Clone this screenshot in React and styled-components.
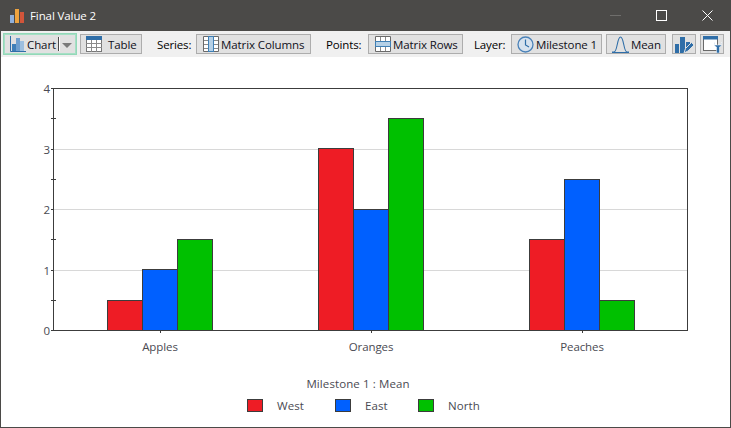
import React from "react";
import styled, { createGlobalStyle } from "styled-components";

const GlobalStyle = createGlobalStyle`
  html, body {
    margin: 0;
    padding: 0;
    background: #ffffff;
  }
  body {
    font-family: "Open Sans", "Noto Sans", "Liberation Sans", sans-serif;
    font-size: 12px;
  }
`;

const Window = styled.div`
  width: 731px;
  height: 428px;
  box-sizing: border-box;
  border: 1px solid #4b4a48;
  border-top: none;
  display: flex;
  flex-direction: column;
  background: #ffffff;
  overflow: hidden;
`;

const TitleBar = styled.div`
  height: 31px;
  flex: none;
  background: #4b4a48;
  display: flex;
  align-items: center;
  padding-left: 9px;
  color: #ffffff;
`;

const Title = styled.span`
  margin-left: 5px;
  font-size: 11.5px;
  letter-spacing: -0.1px;
`;

const WindowControls = styled.div`
  margin-left: auto;
  display: flex;
  align-items: center;
`;

const WindowControl = styled.div`
  width: 46px;
  height: 31px;
  display: flex;
  align-items: center;
  justify-content: center;
`;

const Toolbar = styled.div`
  height: 26px;
  flex: none;
  background: #f0f0f0;
  display: flex;
  align-items: center;
  padding-left: 2px;
`;

const ToolButton = styled.div`
  height: 20px;
  box-sizing: border-box;
  margin-left: ${(p) => p.$gap || 0}px;
  width: ${(p) => p.$width}px;
  background: #e1e1e1;
  border: 1px solid #adadad;
  display: flex;
  align-items: center;
  padding-left: ${(p) => p.$pad ?? 2}px;
  color: #101020;
  font-size: 11.5px;
  letter-spacing: -0.1px;
  white-space: nowrap;
`;

const ActiveButton = styled(ToolButton)`
  height: 22px;
  border: 1px solid #93d8b8;
  box-shadow: inset 0 0 0 1px #a6dfc5;
`;

const ButtonLabel = styled.span`
  margin-left: ${(p) => p.$gap ?? 3}px;
`;

const Separator = styled.span`
  width: 1px;
  height: 14px;
  background: #4a4a4a;
  box-shadow: 1px 0 0 #ffffff;
  margin-left: 2px;
`;

const Caret = styled.span`
  width: 0;
  height: 0;
  margin-left: 3px;
  margin-top: 2px;
  border-left: 5px solid transparent;
  border-right: 5px solid transparent;
  border-top: 5px solid #7a7a7a;
`;

const ToolLabel = styled.span`
  margin-left: ${(p) => p.$gap}px;
  width: ${(p) => p.$width}px;
  color: #000000;
  font-size: 11.5px;
  letter-spacing: -0.15px;
  white-space: nowrap;
`;

const ChartArea = styled.div`
  flex: 1;
  display: flex;
  flex-direction: column;
  background: #ffffff;
`;

const Plot = styled.svg`
  display: block;
  flex: none;
  width: 729px;
  height: 313px;
`;

const AxisText = styled.text`
  font-family: "Open Sans", "Noto Sans", sans-serif;
  font-size: 11.5px;
  fill: #4a4a52;
  letter-spacing: -0.1px;
`;

const LegendTitle = styled.div`
  text-align: center;
  margin-left: -15px;
  margin-top: 6px;
  height: 16px;
  line-height: 16px;
  font-size: 11.5px;
  letter-spacing: 0.1px;
  color: #4a4a52;
`;

const Legend = styled.div`
  display: flex;
  padding-left: 246px;
  margin-top: 6px;
`;

const LegendItem = styled.div`
  display: flex;
  align-items: center;
  width: ${(p) => p.$width}px;
  font-size: 11.5px;
  letter-spacing: 0.1px;
  color: #4a4a52;
`;

const Swatch = styled.span`
  width: 16px;
  height: 13px;
  box-sizing: border-box;
  border: 1px solid #3c3c3c;
  background: ${(p) => p.$color};
  margin-right: 14px;
`;

const BLUE = "#2f6ea8";

const ChartIcon = () => (
  <svg width="16" height="16" viewBox="0 0 16 16">
    <path d="M0.500 0v15.500h16" fill="none" stroke={BLUE} />
    <rect x="2" y="8" width="4" height="7" fill="#3f7fb8" />
    <rect x="6" y="2" width="4" height="13" fill="#6f9fce" />
    <rect x="10" y="5" width="4" height="10" fill="#9dbfe0" />
  </svg>
);

const TableIcon = () => (
  <svg width="16" height="16" viewBox="0 0 16 16">
    <rect x="0.500" y="0.500" width="15" height="15" fill="#fff" stroke="#777" />
    <rect x="0" y="0" width="16" height="4" fill={BLUE} />
    <path d="M5.500 4v12M10.500 4v12M0 7.500h16M0 11.500h16" stroke="#8a8a8a" />
  </svg>
);

const ColumnsIcon = () => (
  <svg width="16" height="16" viewBox="0 0 16 16">
    <path d="M0.500 0.500h15v15h-15z" fill="#fff" stroke="#6a6a6a" />
    <rect x="5.500" y="0.500" width="5" height="15" fill="#b5d0e6" stroke="#3f7fb5" />
    <path d="M1 4.500h4M1 8.500h4M1 12.500h4M11 4.500h4M11 8.500h4M11 12.500h4" stroke="#8a8a8a" />
  </svg>
);

const RowsIcon = () => (
  <svg width="16" height="16" viewBox="0 0 16 16">
    <path d="M0.500 0.500h15v15h-15z" fill="#fff" stroke="#6a6a6a" />
    <path d="M5.500 1v4M10.500 1v4M5.500 11v4M10.500 11v4" stroke="#8a8a8a" />
    <rect x="0.500" y="5.500" width="15" height="5" fill="#b5d0e6" stroke="#3f7fb5" />
  </svg>
);

const ClockIcon = () => (
  <svg width="17" height="17" viewBox="0 0 17 17">
    <circle cx="8.500" cy="8.500" r="7.500" fill="#d7e2ee" stroke="#4a82b8" strokeWidth="1.300" />
    <path d="M8.500 3.500v5.500l3.500 2" fill="none" stroke={BLUE} strokeWidth="1.200" />
  </svg>
);

const BellIcon = () => (
  <svg width="17" height="17" viewBox="0 0 17 17">
    <path d="M0 16h2c3.500 0 3-15 6.500-15s3 15 6.500 15h2" fill="none" stroke={BLUE} strokeWidth="1.100" />
    <path d="M0 16.500h17" stroke={BLUE} />
  </svg>
);

const EditChartIcon = () => (
  <svg width="19" height="17" viewBox="0 0 19 17">
    <rect x="0" y="8" width="4" height="9" fill={BLUE} />
    <rect x="5" y="1" width="5" height="16" fill={BLUE} />
    <rect x="11" y="6" width="4" height="5" fill={BLUE} />
    <path d="M9 17l1.500-4.500 6-6 2.500 2.500-6 6z" fill={BLUE} stroke="#e1e1e1" />
  </svg>
);

const SettingsIcon = () => (
  <svg width="19" height="17" viewBox="0 0 19 17">
    <rect x="0.500" y="0.500" width="14" height="14" fill="#fff" stroke="#6a6a6a" />
    <rect x="0" y="0" width="15" height="3.500" fill={BLUE} />
    <path d="M11.500 6a3.500 3.500 0 0 0 2 5v6h3v-6a3.500 3.500 0 0 0 2-5v3h-7z" fill={BLUE} stroke="#ffffff" strokeWidth="0.500" />
  </svg>
);

const AppIcon = () => (
  <svg width="15" height="14" viewBox="0 0 15 14">
    <rect x="0" y="6" width="4" height="8" fill="#8fb0dc" />
    <rect x="5" y="0" width="4" height="14" fill="#eda33f" />
    <rect x="10" y="3" width="4" height="11" fill="#d2553a" />
  </svg>
);

const PLOT = { left: 53, right: 687, top: 88, bottom: 330 };
const COLORS = { West: "#ee1c25", East: "#0060ff", North: "#00c000" };
const SERIES = Object.keys(COLORS);

const groups = [
  { name: "Apples", x: 107, center: 160, values: [0.5, 1, 1.5] },
  { name: "Oranges", x: 318, center: 371, values: [3, 2, 3.5] },
  { name: "Peaches", x: 529, center: 582, values: [1.5, 2.5, 0.5] },
];

const exactY = (v) => PLOT.bottom - (v / 4) * (PLOT.bottom - PLOT.top);
const yFor = (v) => Math.round(exactY(v)) + 0.5;
// bars round half values up the axis, gridlines round them down
const barTop = (v) => Math.ceil(exactY(v) - 0.5) + 0.5;

const BarChart = () => (
  <Plot viewBox="1 57 729 313">
    {[1, 2, 3].map((v) => (
      <line key={v} x1={PLOT.left} x2={PLOT.right} y1={yFor(v)} y2={yFor(v)} stroke="#d8d8d8" />
    ))}
    {groups.map((g) =>
      g.values.map((v, i) => (
        <rect
          key={g.name + i}
          x={g.x + i * 35 + 0.5}
          y={barTop(v)}
          width={35}
          height={yFor(0) - barTop(v)}
          fill={COLORS[SERIES[i]]}
          stroke="#3c3c3c"
        />
      ))
    )}
    <rect
      x={PLOT.left + 0.5}
      y={PLOT.top + 0.5}
      width={PLOT.right - PLOT.left}
      height={PLOT.bottom - PLOT.top}
      fill="none"
      stroke="#3c3c3c"
    />
    {[0, 0.5, 1, 1.5, 2, 2.5, 3, 3.5, 4].map((v) => (
      <line key={v} x1={PLOT.left - 2} x2={PLOT.left + (v % 1 ? 3 : 0)} y1={yFor(v)} y2={yFor(v)} stroke="#3c3c3c" />
    ))}
    {[0, 1, 2, 3, 4].map((v) => (
      <AxisText key={v} x={PLOT.left - 3} y={yFor(v) + 4} textAnchor="end">
        {v}
      </AxisText>
    ))}
    {groups.map((g) => (
      <g key={g.name}>
        <line x1={g.center + 0.5} x2={g.center + 0.5} y1={PLOT.bottom} y2={PLOT.bottom + 3} stroke="#3c3c3c" />
        <AxisText x={g.center} y={351} textAnchor="middle">
          {g.name}
        </AxisText>
      </g>
    ))}
  </Plot>
);

export default function App() {
  return (
    <Window>
      <GlobalStyle />
      <TitleBar>
        <AppIcon />
        <Title>Final Value 2</Title>
        <WindowControls>
          <WindowControl>
            <svg width="11" height="1"><rect width="11" height="1" fill="#6f6e6c" /></svg>
          </WindowControl>
          <WindowControl>
            <svg width="11" height="11"><rect x="0.5" y="0.5" width="10" height="10" fill="none" stroke="#fff" /></svg>
          </WindowControl>
          <WindowControl>
            <svg width="11" height="11"><path d="M0.500 0.500l10 10M10.500 0.500l-10 10" stroke="#fff" /></svg>
          </WindowControl>
        </WindowControls>
      </TitleBar>
      <Toolbar>
        <ActiveButton $width={74} $pad={6}>
          <ChartIcon />
          <ButtonLabel $gap={1}>Chart</ButtonLabel>
          <Separator />
          <Caret />
        </ActiveButton>
        <ToolButton $gap={3} $width={62} $pad={5}>
          <TableIcon />
          <ButtonLabel $gap={6}>Table</ButtonLabel>
        </ToolButton>
        <ToolLabel $gap={15} $width={39}>Series:</ToolLabel>
        <ToolButton $width={115} $pad={6}>
          <ColumnsIcon />
          <ButtonLabel $gap={2}>Matrix Columns</ButtonLabel>
        </ToolButton>
        <ToolLabel $gap={15} $width={42}>Points:</ToolLabel>
        <ToolButton $width={95} $pad={6}>
          <RowsIcon />
          <ButtonLabel $gap={2}>Matrix Rows</ButtonLabel>
        </ToolButton>
        <ToolLabel $gap={11} $width={37}>Layer:</ToolLabel>
        <ToolButton $width={91} $pad={5}>
          <ClockIcon />
          <ButtonLabel $gap={2}>Milestone 1</ButtonLabel>
        </ToolButton>
        <ToolButton $gap={4} $width={60} $pad={5}>
          <BellIcon />
          <ButtonLabel $gap={2}>Mean</ButtonLabel>
        </ToolButton>
        <ToolButton $gap={6} $width={24} $pad={2}>
          <EditChartIcon />
        </ToolButton>
        <ToolButton $gap={4} $width={24} $pad={2}>
          <SettingsIcon />
        </ToolButton>
      </Toolbar>
      <ChartArea>
        <BarChart />
        <LegendTitle>Milestone 1 : Mean</LegendTitle>
        <Legend>
          <LegendItem $width={88}>
            <Swatch $color={COLORS.West} />
            West
          </LegendItem>
          <LegendItem $width={83}>
            <Swatch $color={COLORS.East} />
            East
          </LegendItem>
          <LegendItem $width={80}>
            <Swatch $color={COLORS.North} />
            North
          </LegendItem>
        </Legend>
      </ChartArea>
    </Window>
  );
}
